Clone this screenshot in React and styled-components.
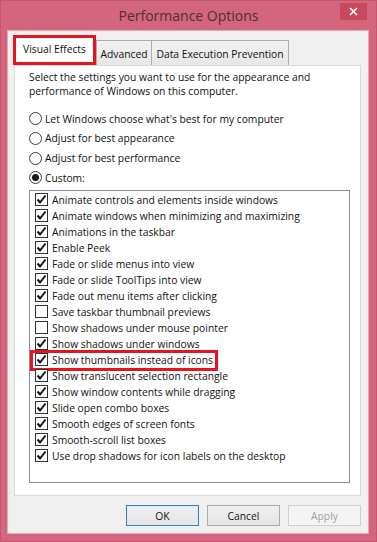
import React from 'react';
import styled, { createGlobalStyle } from 'styled-components';

const FONT = `"Open Sans", "Noto Sans", sans-serif`;

const GlobalStyle = createGlobalStyle`
  html, body { margin: 0; padding: 0; }
  body { width: 377px; height: 542px; overflow: hidden; background: #d4647d; }
  * { box-sizing: border-box; }
`;

const Window = styled.div`
  width: 377px;
  height: 542px;
  display: flex;
  flex-direction: column;
  background: #d4657e;
  box-shadow: inset 0 0 0 1px #c4566f;
  font-family: ${FONT};
  font-size: 10.3px;
  color: #111;
`;

const TitleBar = styled.div`
  height: 31px;
  display: grid;
  grid-template-columns: 1fr auto 1fr;
  align-items: start;
`;

const Title = styled.div`
  grid-column: 2;
  font-size: 14px;
  line-height: 31px;
  color: #4a3238;
`;

const CloseButton = styled.div`
  grid-column: 3;
  justify-self: end;
  margin-top: 3px;
  margin-right: 10px;
  width: 27px;
  height: 17px;
  background: #c8495a;
  display: flex;
  align-items: center;
  justify-content: center;
`;

const Client = styled.div`
  flex: 1;
  margin: 0 9px 9px 8px;
  background: #f0f0f0;
  padding: 4px 7px 7px 6px;
  display: flex;
  flex-direction: column;
  box-shadow: 0 0 0 1px #e6a9b6;
`;

const TabStrip = styled.div`
  height: 30px;
  display: flex;
  align-items: flex-end;
`;

const Tab = styled.div`
  width: ${(p) => p.$w}px;
  height: 25px;
  border: 1px solid #acacac;
  border-bottom: none;
  ${(p) => (p.$noLeft ? 'border-left: none;' : '')}
  background: linear-gradient(#f2f2f2, #e6e6e6);
  display: flex;
  align-items: center;
  justify-content: center;
  padding-top: 1px;
  white-space: nowrap;
`;

const ActiveTab = styled.div`
  width: 83px;
  height: 30px;
  margin-left: -1px;
  background: #ffffff;
  border: 3px solid #e3161f;
  display: flex;
  align-items: center;
  justify-content: center;
  padding-bottom: 2px;
  white-space: nowrap;
  position: relative;
  z-index: 1;
`;

const Panel = styled.div`
  flex: 1;
  background: #ffffff;
  border: 1px solid #d9d9d9;
  padding: 4px 10px 12px 14px;
  display: flex;
  flex-direction: column;
`;

const Description = styled.p`
  margin: 0;
  line-height: 14px;
`;

const RadioGroup = styled.div`
  margin-top: 11px;
  display: flex;
  flex-direction: column;
`;

const RadioRow = styled.div`
  height: 19.67px;
  display: flex;
  align-items: center;
  gap: 3px;
  white-space: nowrap;
`;

const RadioCircle = styled.span`
  width: 13px;
  height: 13px;
  border-radius: 50%;
  border: 1px solid #3a3a3a;
  background: #fff;
  display: flex;
  align-items: center;
  justify-content: center;
  flex: none;
  &::after {
    content: '';
    width: 7px;
    height: 7px;
    border-radius: 50%;
    background: #1a1a1a;
    display: ${(p) => (p.$checked ? 'block' : 'none')};
  }
`;

const ListBox = styled.div`
  margin-top: 2px;
  flex: 1;
  border: 1px solid #8c8c8c;
  background: #fff;
  padding: 1px 0 0 5px;
  display: flex;
  flex-direction: column;
`;

const CheckRow = styled.div`
  height: 16px;
  display: flex;
  align-items: center;
  gap: 4px;
  position: relative;
  white-space: nowrap;
`;

const CheckBox = styled.span`
  width: 13px;
  height: 13px;
  border: 1px solid #333;
  background: #fff;
  flex: none;
  display: flex;
  align-items: center;
  justify-content: center;
`;

const Highlight = styled.span`
  position: absolute;
  left: -5px;
  top: -2px;
  width: 188px;
  height: 21px;
  border: 3px solid #e3161f;
  pointer-events: none;
`;

const Footer = styled.div`
  margin-top: 9px;
  display: flex;
  justify-content: flex-end;
  gap: 8px;
`;

const Button = styled.button`
  width: 73px;
  height: 21px;
  padding: 0;
  font-family: ${FONT};
  font-size: 10.3px;
  color: ${(p) => (p.disabled ? '#a0a0a0' : '#111')};
  background: ${(p) => (p.disabled ? '#f4f4f4' : 'linear-gradient(#f0f0f0, #e5e5e5)')};
  border: 1px solid ${(p) => (p.disabled ? '#cfcfcf' : p.$default ? '#3c7fb1' : '#acacac')};
  box-shadow: ${(p) => (p.$default ? 'inset 0 0 0 1px #dbeaf7' : 'none')};
`;

const Check = () => (
  <svg width="11" height="11" viewBox="0 0 11 11">
    <polyline points="1.5,5.5 4,8.5 9.5,1.5" fill="none" stroke="#111" strokeWidth="2" />
  </svg>
);

const items = [
  ['Animate controls and elements inside windows', true],
  ['Animate windows when minimizing and maximizing', true],
  ['Animations in the taskbar', true],
  ['Enable Peek', true],
  ['Fade or slide menus into view', true],
  ['Fade or slide ToolTips into view', true],
  ['Fade out menu items after clicking', true],
  ['Save taskbar thumbnail previews', false],
  ['Show shadows under mouse pointer', false],
  ['Show shadows under windows', true],
  ['Show thumbnails instead of icons', true, true],
  ['Show translucent selection rectangle', true],
  ['Show window contents while dragging', true],
  ['Slide open combo boxes', true],
  ['Smooth edges of screen fonts', true],
  ['Smooth-scroll list boxes', true],
  ['Use drop shadows for icon labels on the desktop', true],
];

const radios = [
  ["Let Windows choose what's best for my computer", false],
  ['Adjust for best appearance', false],
  ['Adjust for best performance', false],
  ['Custom:', true],
];

export default function App() {
  return (
    <>
      <GlobalStyle />
      <Window>
        <TitleBar>
          <Title>Performance Options</Title>
          <CloseButton>
            <svg width="9" height="9" viewBox="0 0 9 9">
              <path d="M1 1 L8 8 M8 1 L1 8" stroke="#fff" strokeWidth="1.7" />
            </svg>
          </CloseButton>
        </TitleBar>
        <Client>
          <TabStrip>
            <ActiveTab>Visual Effects</ActiveTab>
            <Tab $w={56}>Advanced</Tab>
            <Tab $w={137} $noLeft>Data Execution Prevention</Tab>
          </TabStrip>
          <Panel>
            <Description>
              Select the settings you want to use for the appearance and performance of Windows on this computer.
            </Description>
            <RadioGroup>
              {radios.map(([label, checked]) => (
                <RadioRow key={label}>
                  <RadioCircle $checked={checked} />
                  {label}
                </RadioRow>
              ))}
            </RadioGroup>
            <ListBox>
              {items.map(([label, checked, hl]) => (
                <CheckRow key={label}>
                  <CheckBox>{checked && <Check />}</CheckBox>
                  {label}
                  {hl && <Highlight />}
                </CheckRow>
              ))}
            </ListBox>
          </Panel>
          <Footer>
            <Button $default>OK</Button>
            <Button>Cancel</Button>
            <Button disabled>Apply</Button>
          </Footer>
        </Client>
      </Window>
    </>
  );
}
